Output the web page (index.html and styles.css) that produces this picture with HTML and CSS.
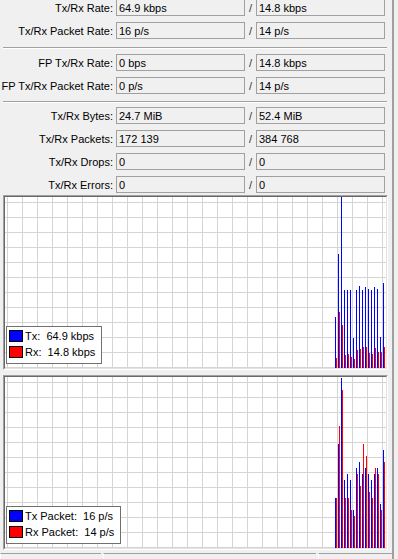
FILE: index.html
```html
<!DOCTYPE html>
<html lang="en">
<head>
  <meta charset="UTF-8">
  <title>Traffic</title>
  <link rel="stylesheet" href="styles.css">
</head>
<body>
  <div class="window">
    <div class="panel">
      <div class="group first">
        <div class="row"><label>Tx/Rx Rate:</label><div class="field">64.9 kbps</div><span class="slash">/</span><div class="field">14.8 kbps</div></div>
        <div class="row"><label>Tx/Rx Packet Rate:</label><div class="field">16 p/s</div><span class="slash">/</span><div class="field">14 p/s</div></div>
      </div>
      <div class="sep"></div>
      <div class="group">
        <div class="row"><label>FP Tx/Rx Rate:</label><div class="field">0 bps</div><span class="slash">/</span><div class="field">14.8 kbps</div></div>
        <div class="row"><label>FP Tx/Rx Packet Rate:</label><div class="field">0 p/s</div><span class="slash">/</span><div class="field">14 p/s</div></div>
      </div>
      <div class="sep second"></div>
      <div class="group">
        <div class="row"><label>Tx/Rx Bytes:</label><div class="field">24.7 MiB</div><span class="slash">/</span><div class="field">52.4 MiB</div></div>
        <div class="row"><label>Tx/Rx Packets:</label><div class="field">172 139</div><span class="slash">/</span><div class="field">384 768</div></div>
        <div class="row"><label>Tx/Rx Drops:</label><div class="field">0</div><span class="slash">/</span><div class="field">0</div></div>
        <div class="row"><label>Tx/Rx Errors:</label><div class="field">0</div><span class="slash">/</span><div class="field">0</div></div>
      </div>

      <div class="graph">
        <div class="plot">
          <svg id="rateGraph" width="381" height="171">
            <defs>
              <pattern id="grid" width="15" height="15" x="2" y="5" patternUnits="userSpaceOnUse">
                <path d="M0.5 0V15M0 0.5H15" stroke="#d4d4d4" fill="none"/>
              </pattern>
            </defs>
            <rect width="381" height="171" fill="url(#grid)"/>
          </svg>
          <div class="legend">
            <div class="legend-row"><span class="swatch tx"></span><span>Tx:  64.9 kbps</span></div>
            <div class="legend-row"><span class="swatch rx"></span><span>Rx:  14.8 kbps</span></div>
          </div>
        </div>
      </div>

      <div class="graph">
        <div class="plot">
          <svg id="packetGraph" width="381" height="171">
            <rect width="381" height="171" fill="url(#grid)"/>
          </svg>
          <div class="legend">
            <div class="legend-row"><span class="swatch tx"></span><span>Tx Packet:  16 p/s</span></div>
            <div class="legend-row"><span class="swatch rx"></span><span>Rx Packet:  14 p/s</span></div>
          </div>
        </div>
      </div>

      <div class="tabs">
        <div class="tab t1"></div>
        <div class="tab t2"></div>
        <div class="tab t3"></div>
      </div>
    </div>
    <div class="edge"></div>
  </div>

  <script>
    // bar tops (svg y) for each sample, bottom is 171
    const rate = {
      tx: [120, 57, 0, 93, 93, 93, 141, 93, 89, 93, 90, 92, 93, 90, 92, 140, 86],
      rx: [161, 115, 128, 158, 157, 160, 162, 153, 152, 150, 150, 156, 157, 151, 155, 155, 150]
    };
    const packets = {
      tx: [121, 67, 1, 103, 97, 103, 133, 91, 85, 97, 91, 97, 103, 97, 91, 127, 73],
      rx: [121, 49, 13, 121, 121, 133, 139, 97, 109, 67, 79, 115, 121, 91, 97, 133, 85]
    };

    function drawBars(id, data) {
      const svg = document.getElementById(id);
      const ns = "http://www.w3.org/2000/svg";
      data.tx.forEach(function (top, i) {
        [["tx", top, 0, "#0000ff"], ["rx", data.rx[i], 1, "#ff0000"]].forEach(function (b) {
          const r = document.createElementNS(ns, "rect");
          r.setAttribute("x", 330 + i * 3 + b[2]);
          r.setAttribute("y", b[1]);
          r.setAttribute("width", 1);
          r.setAttribute("height", 171 - b[1]);
          r.setAttribute("fill", b[3]);
          svg.appendChild(r);
        });
      });
    }

    drawBars("rateGraph", rate);
    drawBars("packetGraph", packets);
  </script>
</body>
</html>
```

FILE: styles.css
```css
body {
  margin: 0;
  background-color: #f0f0f0;
  font-family: "Liberation Sans", Arial, sans-serif;
  font-size: 11px;
  color: #000;
}
.window {
  display: flex;
  width: 398px;
  height: 559px;
  overflow: hidden;
}
.panel {
  width: 392px;
  display: flex;
  flex-direction: column;
}
.edge {
  width: 2px;
  background-color: #a0a0a0;
}
.group.first {
  margin-top: -1px;
}
.row {
  display: grid;
  grid-template-columns: 116px 129px 11px 129px;
  height: 17px;
}
.row + .row {
  margin-top: 6px;
}
.row label {
  display: flex;
  justify-content: flex-end;
  padding: 2px 3px 0 0;
  line-height: 15px;
  white-space: nowrap;
}
.field {
  box-sizing: border-box;
  height: 17px;
  border: 1px solid #a0a0a0;
  padding: 1px 2px 0;
  line-height: 15px;
  white-space: nowrap;
  overflow: hidden;
}
.slash {
  text-align: center;
  padding-top: 2px;
  line-height: 15px;
  color: #333;
}
.sep {
  margin: 8px 5px 5px 3px;
  border-top: 1px solid #a0a0a0;
  border-bottom: 1px solid #fff;
}
.sep.second {
  margin: 7px 5px 4px 3px;
}
.graph {
  box-sizing: border-box;
  width: 385px;
  margin: 2px 0 0 3px;
  border: 1px solid;
  border-color: #a0a0a0 #fff #fff #a0a0a0;
}
.graph + .graph {
  margin-top: 5px;
}
.plot {
  position: relative;
  height: 171px;
  background-color: #fff;
  border: 1px solid;
  border-color: #696969 #e3e3e3 #e3e3e3 #696969;
}
.plot svg {
  display: block;
}
.legend {
  position: absolute;
  left: 1px;
  bottom: 4px;
  background-color: #fff;
  border: 1px solid #707070;
  padding: 3px 6px 5px 2px;
}
.legend-row {
  display: flex;
  align-items: center;
  gap: 2px;
  height: 12px;
  line-height: 12px;
  white-space: pre;
}
.legend-row + .legend-row {
  margin-top: 4px;
}
.swatch {
  box-sizing: border-box;
  width: 14px;
  height: 12px;
  border: 1px solid #000;
}
.swatch.tx {
  background-color: #0000ff;
}
.swatch.rx {
  background-color: #ff0000;
}
.tabs {
  display: flex;
  gap: 2px;
  margin-top: 3px;
  flex: 1;
}
.tab {
  border-top: 1px solid #a0a0a0;
  border-left: 1px solid #fff;
}
.t1 {
  width: 100px;
}
.t2 {
  width: 212px;
}
.t3 {
  flex: 1;
}
```
